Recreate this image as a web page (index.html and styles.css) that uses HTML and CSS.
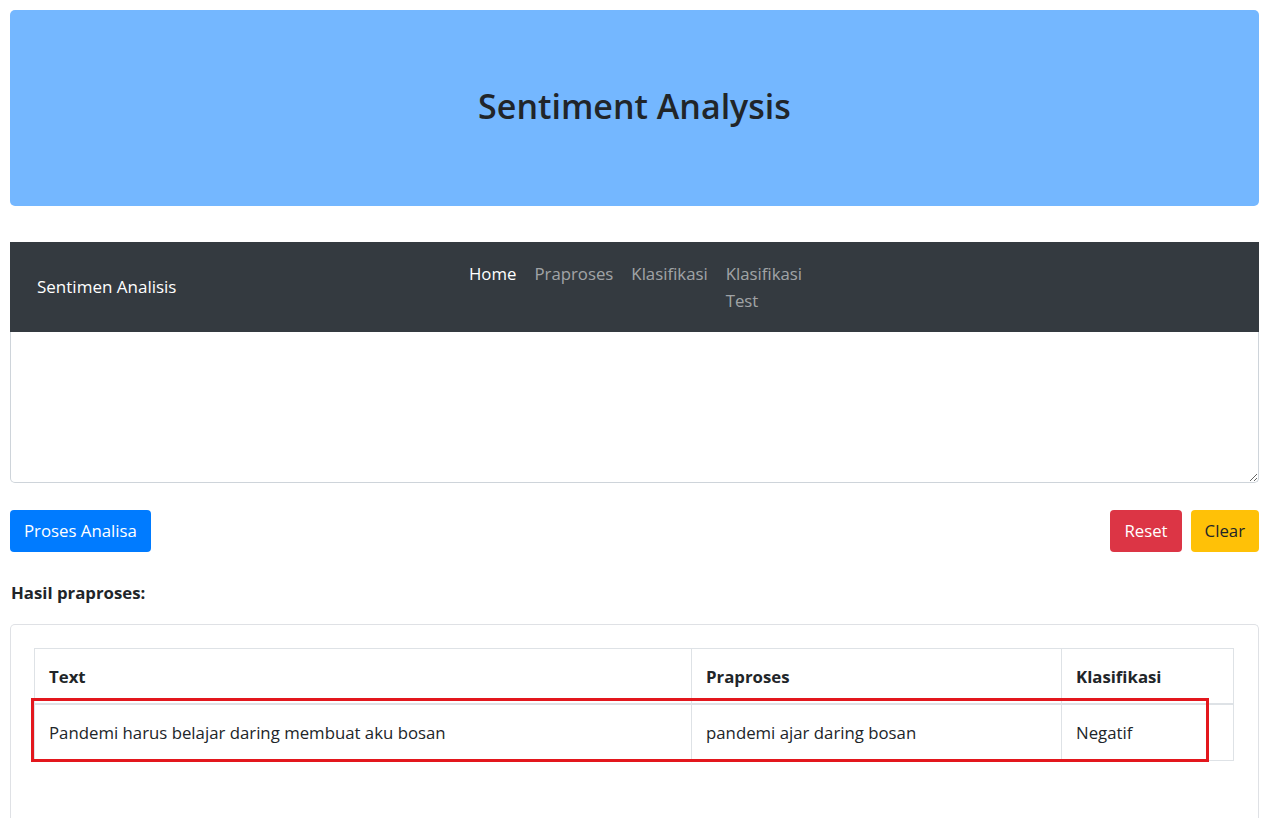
FILE: index.html
```html
<!DOCTYPE html>
<html lang="id">
<head>
<meta charset="utf-8">
<title>Sentiment Analysis</title>
<link rel="stylesheet" href="styles.css">
</head>
<body>
<div class="page">
  <header class="jumbo">
    <h1 class="jumbo-title">Sentiment Analysis</h1>
  </header>

  <nav class="navbar">
    <span class="brand">Sentimen Analisis</span>
    <ul class="nav">
      <li class="nav-link active">Home</li>
      <li class="nav-link">Praproses</li>
      <li class="nav-link">Klasifikasi</li>
      <li class="nav-link narrow">Klasifikasi Test</li>
    </ul>
  </nav>

  <textarea class="input" aria-label="Teks"></textarea>

  <div class="actions">
    <button class="btn btn-primary">Proses Analisa</button>
    <div class="actions-right">
      <button class="btn btn-danger">Reset</button>
      <button class="btn btn-warning">Clear</button>
    </div>
  </div>

  <h6 class="result-title">Hasil praproses:</h6>

  <section class="card">
    <div class="table-wrap">
      <table class="table">
        <colgroup>
          <col class="c1"><col class="c2"><col class="c3">
        </colgroup>
        <thead>
          <tr><th>Text</th><th>Praproses</th><th>Klasifikasi</th></tr>
        </thead>
        <tbody>
          <tr><td>Pandemi harus belajar daring membuat aku bosan</td><td>pandemi ajar daring bosan</td><td>Negatif</td></tr>
        </tbody>
      </table>
      <div class="highlight"></div>
    </div>
  </section>
</div>
</body>
</html>
```

FILE: styles.css
```css
* { box-sizing: border-box; }
html, body { margin: 0; padding: 0; background: #fff; }
body {
  font-family: "Open Sans", "Noto Sans", sans-serif;
  font-size: 16.8px;
  line-height: 1.5;
  color: #212529;
}
.page { padding: 10px 4px 0 10px; }

.jumbo {
  background: #74b7ff;
  border-radius: 5px;
  height: 196px;
  display: flex;
  align-items: center;
  justify-content: center;
}
.jumbo-title {
  margin: 0 0 4px 0;
  font-size: 34px;
  font-weight: 600;
  color: #212529;
  line-height: 1.2;
}

.navbar {
  margin-top: 36px;
  background: #343a40;
  height: 90px;
  display: flex;
  align-items: center;
  padding: 0 27px;
}
.brand {
  color: #fff;
  font-size: 17px;
  width: 432px;
}
.nav {
  list-style: none;
  margin: 0;
  padding: 0;
  display: flex;
  align-items: flex-start;
  gap: 18px;
}
.nav-link { color: rgba(255,255,255,.55); line-height: 27px; }
.nav-link.active { color: #fff; }
.nav-link.narrow { width: 78px; }

.input {
  display: block;
  width: 100%;
  height: 151px;
  margin: 0;
  border: 1px solid #ced4da;
  border-top: none;
  border-radius: 0 0 5px 5px;
  resize: vertical;
  font: inherit;
}

.actions {
  margin-top: 27px;
  display: flex;
  justify-content: space-between;
}
.actions-right { display: flex; gap: 9px; }
.btn {
  font: inherit;
  height: 42px;
  border: none;
  border-radius: 4px;
  padding: 0 14px;
  cursor: pointer;
}
.btn-primary { background: #007bff; color: #fff; }
.btn-danger { background: #dc3545; color: #fff; }
.btn-warning { background: #ffc107; color: #212529; }

.result-title {
  margin: 29px 0 0 1px;
  font-size: 16.8px;
  font-weight: 700;
  line-height: 24px;
}

.card {
  margin-top: 19px;
  border: 1px solid #dfe1e5;
  border-bottom: none;
  border-radius: 5px 5px 0 0;
  padding: 23px 24px 60px 23px;
}
.table-wrap { position: relative; }
.table {
  width: 100%;
  border-collapse: collapse;
}
.c1 { width: 657px; }
.c2 { width: 370px; }
.table th, .table td {
  border: 1px solid #dee2e6;
  text-align: left;
  padding: 14px 14px;
  vertical-align: top;
  line-height: 27px;
}
.table th { font-weight: 700; border-bottom-width: 2px; padding-bottom: 13px; }
.highlight {
  position: absolute;
  left: -3px;
  top: 50px;
  width: 1178px;
  height: 64px;
  border: 3px solid #e3171d;
  pointer-events: none;
}
```
